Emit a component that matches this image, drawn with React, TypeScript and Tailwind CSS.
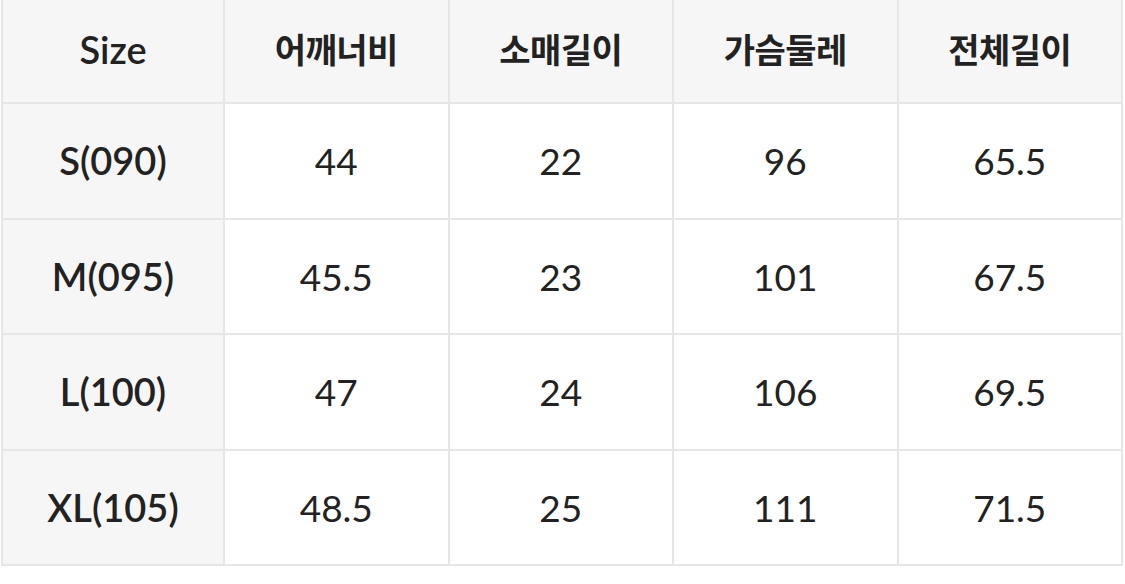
import React from "react";

const headers = ["Size", "어깨너비", "소매길이", "가슴둘레", "전체길이"];
const rows = [
  ["S(090)", "44", "22", "96", "65.5"],
  ["M(095)", "45.5", "23", "101", "67.5"],
  ["L(100)", "47", "24", "106", "69.5"],
  ["XL(105)", "48.5", "25", "111", "71.5"],
];

export default function App() {
  return (
    <div className="w-[1125px] h-[584px] bg-white overflow-hidden">
      <div
        className="ml-[1px] w-[1122px] grid grid-cols-[220px_repeat(4,1fr)] grid-rows-[102px_repeat(4,113.5px)] gap-[2px] px-[2px] pb-[2px] bg-[#e6e6e6] text-[#222222]"
        style={{ fontFamily: "Lato, 'Noto Sans CJK KR', sans-serif" }}
      >
        {headers.map((h, i) => (
          <div
            key={h}
            className={`bg-[#f6f6f6] flex items-center justify-center pb-[4px] ${
              i === 0 ? "text-[38px] font-semibold" : "text-[34px] font-bold tracking-[-0.5px]"
            }`}
          >
            {h}
          </div>
        ))}
        {rows.map((r) =>
          r.map((c, j) => (
            <div
              key={r[0] + j}
              className={`flex items-center justify-center text-[37px] ${
                j === 0 ? "bg-[#f6f6f6] font-semibold text-[38px]" : "bg-white"
              }`}
            >
              {c}
            </div>
          ))
        )}
      </div>
    </div>
  );
}
